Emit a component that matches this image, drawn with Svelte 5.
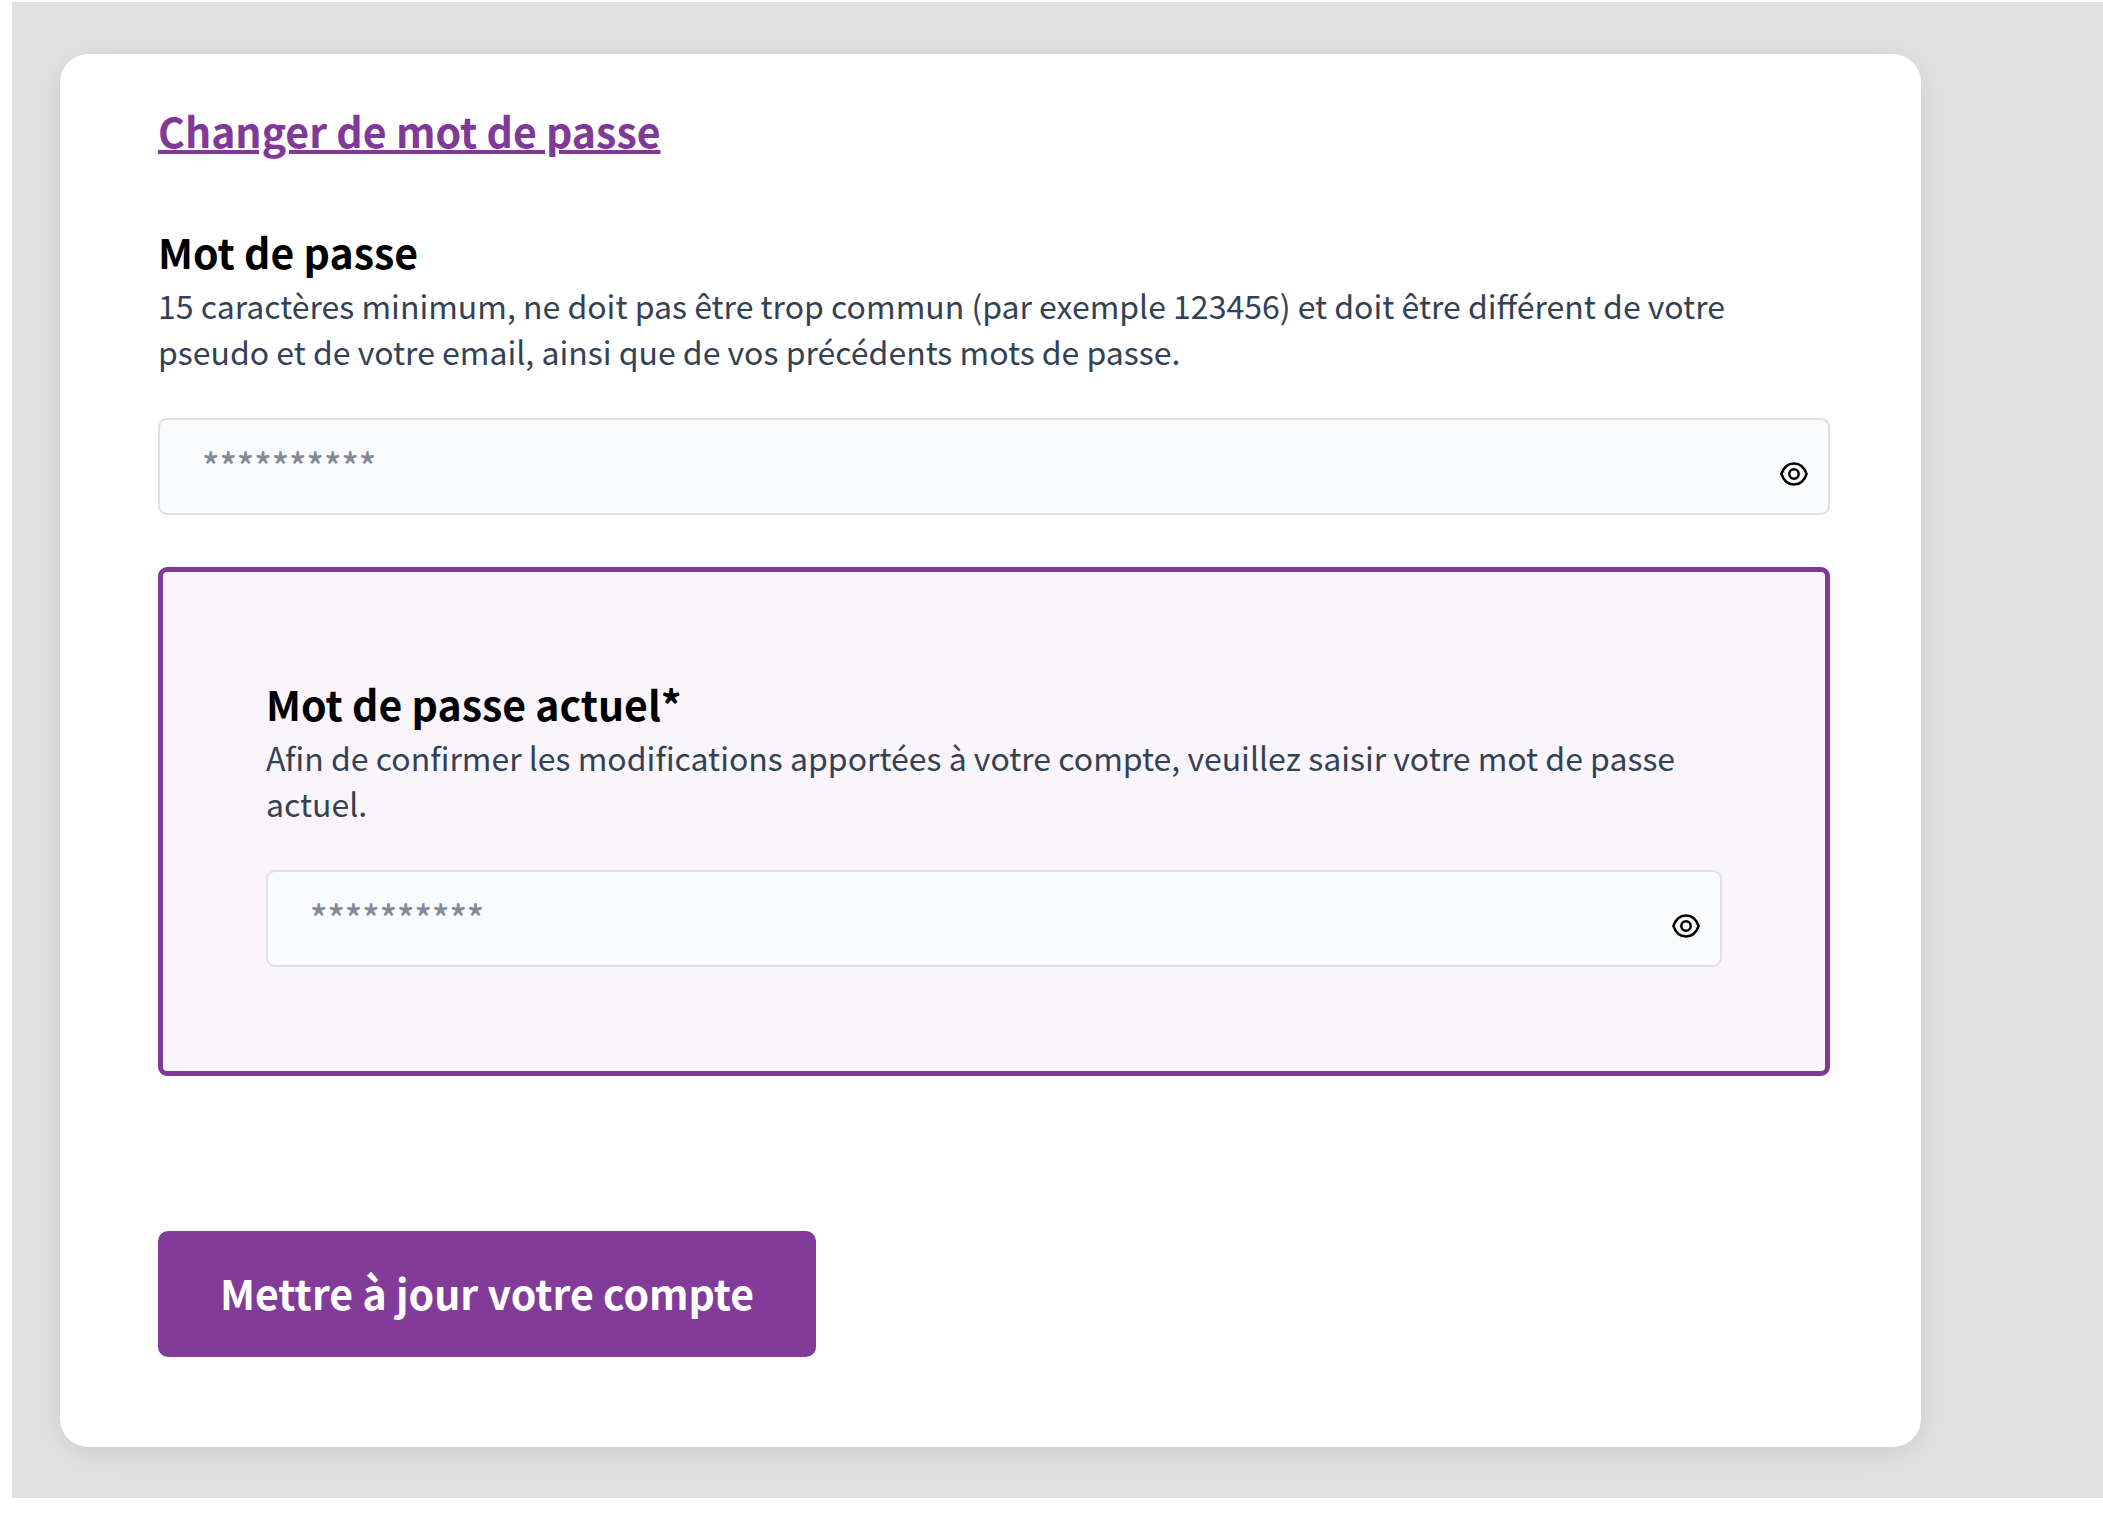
<script lang="ts">
  let password = $state("");
  let currentPassword = $state("");
  let showPassword = $state(false);
  let showCurrent = $state(false);

  function submit(event: SubmitEvent): void {
    event.preventDefault();
  }
</script>

{#snippet eye()}
  <svg class="eye" viewBox="0 0 28 24" aria-hidden="true">
    <path d="M1.4 12C3.6 5.6 8.4 1.5 14 1.5S24.4 5.6 26.6 12C24.4 18.4 19.6 22.5 14 22.5S3.6 18.4 1.4 12Z" />
    <circle cx="14" cy="12" r="4.7" />
  </svg>
{/snippet}

<main>
  <form class="card" onsubmit={submit}>
    <a class="title" href="#password">Changer de mot de passe</a>

    <div class="field">
      <label for="password">Mot de passe</label>
      <p id="password-help">
        15 caractères minimum, ne doit pas être trop commun (par exemple 123456) et doit être
        différent de votre pseudo et de votre email, ainsi que de vos précédents mots de passe.
      </p>
      <div class="input">
        <input
          id="password"
          type={showPassword ? "text" : "password"}
          placeholder="**********"
          aria-describedby="password-help"
          bind:value={password}
        />
        <button
          type="button"
          class="toggle"
          aria-label="Afficher le mot de passe"
          onclick={() => (showPassword = !showPassword)}
        >
          {@render eye()}
        </button>
      </div>
    </div>

    <div class="field confirm">
      <label for="current">Mot de passe actuel*</label>
      <p id="current-help">
        Afin de confirmer les modifications apportées à votre compte, veuillez saisir votre mot de
        passe actuel.
      </p>
      <div class="input">
        <input
          id="current"
          type={showCurrent ? "text" : "password"}
          placeholder="**********"
          aria-describedby="current-help"
          required
          bind:value={currentPassword}
        />
        <button
          type="button"
          class="toggle"
          aria-label="Afficher le mot de passe actuel"
          onclick={() => (showCurrent = !showCurrent)}
        >
          {@render eye()}
        </button>
      </div>
    </div>

    <button type="submit" class="submit">Mettre à jour votre compte</button>
  </form>
</main>

<style>
  :global(body) {
    margin: 0;
    background: #ffffff;
  }

  main {
    margin: 2px 0 15px 12px;
    padding: 52px 182px 51px 48px;
    background: #e1e1e1;
    font-family: "Noto Sans CJK SC", "Open Sans", sans-serif;
    overflow: hidden;
  }

  .card {
    display: flex;
    flex-direction: column;
    align-items: flex-start;
    padding: 50px 91px 90px 98px;
    border-radius: 28px;
    background: #ffffff;
    box-shadow:
      0 6px 48px rgba(0, 0, 0, 0.06),
      0 4px 16px rgba(0, 0, 0, 0.04);
  }

  .title {
    color: #803899;
    font-size: 41px;
    font-weight: bold;
    line-height: 52px;
    text-decoration: underline;
    text-decoration-thickness: 4px;
    text-underline-offset: 2px;
  }

  .field {
    box-sizing: border-box;
    width: 100%;
    margin-top: 69px;
  }

  label {
    display: block;
    color: #000000;
    font-size: 41px;
    font-weight: bold;
    line-height: 52px;
  }

  p {
    margin: 5px 0 44px;
    color: #334155;
    font-size: 32px;
    line-height: 46px;
  }

  .input {
    display: flex;
    box-sizing: border-box;
    height: 97px;
    border: 2px solid #e0e0e0;
    border-radius: 9px;
    background: #fafbfd;
  }

  input {
    flex: 1;
    min-width: 0;
    padding: 0 0 6px 42px;
    border: 0;
    outline: 0;
    background: none;
    color: #334155;
    font-family: inherit;
    font-size: 36px;
    font-weight: 500;
  }

  input::placeholder {
    color: #858a99;
    opacity: 1;
  }

  .toggle {
    display: flex;
    align-items: center;
    padding: 14px 20px 0;
    border: 0;
    background: none;
    cursor: pointer;
  }

  .eye {
    width: 28px;
    height: 24px;
    fill: none;
    stroke: #000000;
    stroke-width: 2.5;
    stroke-linejoin: round;
  }

  .confirm {
    margin-top: 52px;
    padding: 105px 103px 104px;
    border: 5px solid #803899;
    border-radius: 9px;
    background: #faf5fb;
  }

  .submit {
    margin-top: 155px;
    padding: 35px 62px 39px;
    border: 0;
    border-radius: 10px;
    background: #823b99;
    color: #ffffff;
    font-family: inherit;
    font-size: 41px;
    font-weight: bold;
    line-height: 52px;
    cursor: pointer;
  }
</style>
